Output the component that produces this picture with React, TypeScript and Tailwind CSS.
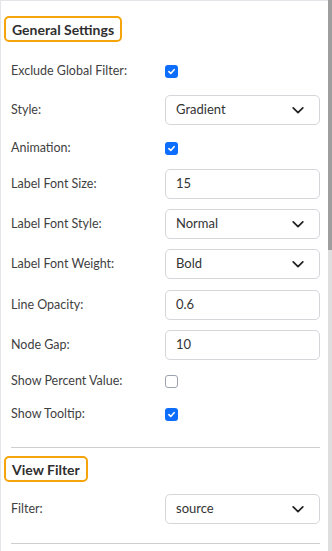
import React from 'react';

const font = { fontFamily: 'Lato, "Noto Sans", sans-serif' };

function Chevron() {
  return (
    <svg width="14" height="14" viewBox="0 0 16 16" fill="none" stroke="#222" strokeWidth="2" strokeLinecap="round" strokeLinejoin="round">
      <path d="M2.5 5.5 8 11l5.5-5.5" />
    </svg>
  );
}

function Check({ on }: { on: boolean }) {
  if (!on) {
    return <div className="w-[13px] h-[13px] rounded-[3px] border border-[#9ca3af] bg-white" />;
  }
  return (
    <div className="w-[13px] h-[13px] rounded-[3px] bg-[#0d6efd] flex items-center justify-center">
      <svg width="9" height="9" viewBox="0 0 12 12" fill="none" stroke="white" strokeWidth="2.2" strokeLinecap="round" strokeLinejoin="round">
        <path d="M2.5 6.3 5 8.6l4.5-5" />
      </svg>
    </div>
  );
}

function Row({ label, mt, children }: { label: string; mt: string; children: React.ReactNode }) {
  return (
    <div className={`flex items-center h-[30px] ${mt}`}>
      <div className="w-[154px] text-[12.5px] text-[#3f3f3f]">{label}</div>
      <div className="flex-1 flex items-center">{children}</div>
    </div>
  );
}

function Select({ value }: { value: string }) {
  return (
    <div className="w-full h-[30px] border border-[#d4d6da] rounded-[5px] flex items-center justify-between pl-[10px] pr-[14px] text-[13px] text-[#333]">
      <span>{value}</span>
      <Chevron />
    </div>
  );
}

function Input({ value }: { value: string }) {
  return (
    <div className="w-full h-[30px] border border-[#d4d6da] rounded-[5px] flex items-center pl-[10px] text-[13px] text-[#333]">
      {value}
    </div>
  );
}

function Heading({ text, mt }: { text: string; mt: string }) {
  return (
    <div className={`${mt} -ml-[7px] self-start border-2 border-[#f5a50b] rounded-[5px] px-[6px] h-[26px] flex items-center text-[14px] font-bold text-[#2f2f2f]`}>
      {text}
    </div>
  );
}

export default function App() {
  return (
    <div className="w-[332px] h-[551px] bg-white flex overflow-hidden" style={font}>
      <div className="flex-1 border-t border-l border-[#e3e5e8] flex flex-col pl-[10px] pr-[8px]">
        <Heading text="General Settings" mt="mt-[15px]" />
        <Row label="Exclude Global Filter:" mt="mt-[14px]"><Check on /></Row>
        <Row label="Style:" mt="mt-[9px]"><Select value="Gradient" /></Row>
        <Row label="Animation:" mt="mt-[8px]"><Check on /></Row>
        <Row label="Label Font Size:" mt="mt-[6px]"><Input value="15" /></Row>
        <Row label="Label Font Style:" mt="mt-[10px]"><Select value="Normal" /></Row>
        <Row label="Label Font Weight:" mt="mt-[10px]"><Select value="Bold" /></Row>
        <Row label="Line Opacity:" mt="mt-[11px]"><Input value="0.6" /></Row>
        <Row label="Node Gap:" mt="mt-[10px]"><Input value="10" /></Row>
        <Row label="Show Percent Value:" mt="mt-[6px]"><Check on={false} /></Row>
        <Row label="Show Tooltip:" mt="mt-[3px]"><Check on /></Row>
        <div className="mt-[18px] border-t border-[#cfcfcf]" />
        <Heading text="View Filter" mt="mt-[8px]" />
        <Row label="Filter:" mt="mt-[12px]"><Select value="source" /></Row>
        <div className="mt-[19px] border-t border-[#cfcfcf]" />
      </div>
      <div className="w-[4px] bg-[#dedede] flex flex-col">
        <div className="h-[250px] bg-[#9e9e9e]" />
      </div>
    </div>
  );
}
